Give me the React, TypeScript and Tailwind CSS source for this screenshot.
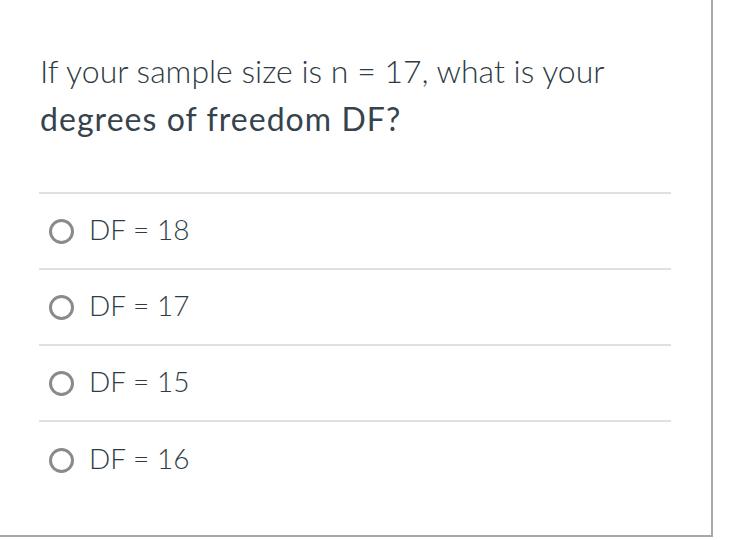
import React from "react";

const options = ["DF = 18", "DF = 17", "DF = 15", "DF = 16"];

export default function App() {
  return (
    <div className="w-[735px] h-[540px] bg-white" style={{ fontFamily: "Lato, 'Open Sans', sans-serif" }}>
      <div className="w-[713px] h-[537px] border-r-2 border-b-2 border-[#a8a8a8] pl-[39px] pr-[40px] pt-[47px]">
        <div className="text-[32px] leading-[48px] text-[#2d3b45] pl-px">
          <div className="font-light whitespace-nowrap">If your sample size is n = 17, what is your</div>
          <div className="font-normal tracking-[1.05px] whitespace-nowrap text-[#36434c]">degrees of freedom DF?</div>
        </div>
        <div className="mt-[49px] border-t-2 border-[#e0e0e0]">
          {options.map((o, i) => (
            <div
              key={o}
              className={`h-[76px] flex items-center ${i < options.length - 1 ? "border-b-2 border-[#e0e0e0]" : ""}`}
            >
              <div className="ml-[10px] w-[25px] h-[25px] rounded-full border-[3px] border-[#8a8a8a]" />
              <span className="ml-[15px] text-[28px] leading-[34px] font-light text-[#2d3b45] -mt-[4px]">{o}</span>
            </div>
          ))}
        </div>
      </div>
    </div>
  );
}
